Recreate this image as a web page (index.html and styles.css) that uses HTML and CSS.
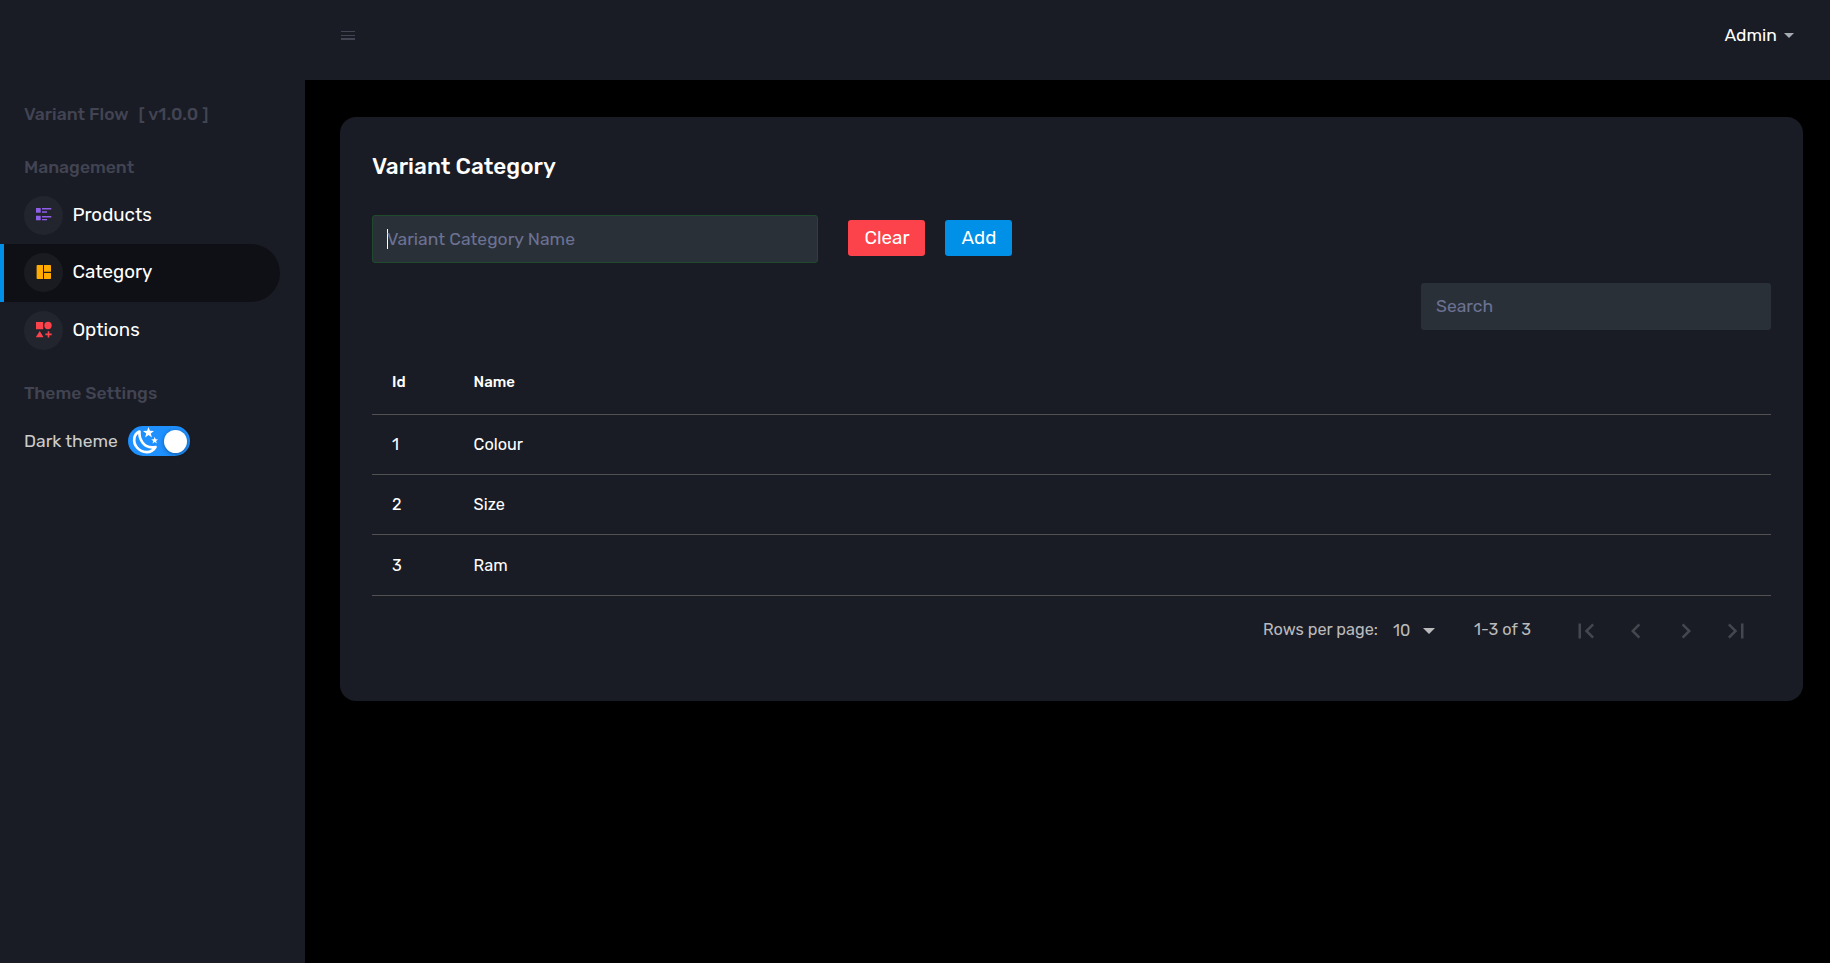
FILE: index.html
```html
<!DOCTYPE html>
<html lang="en">
<head>
<meta charset="utf-8">
<title>Variant Flow</title>
<link rel="stylesheet" href="styles.css">
</head>
<body>
<div class="app">
  <nav class="sidebar">
    <div class="heading brand"><span class="brand-name">Variant Flow</span><span class="brand-version">[ v1.0.0 ]</span></div>
    <div class="heading management">Management</div>
    <ul class="menu">
      <li class="item">
        <span class="badge"><svg width="39" height="39" viewBox="0 0 39 39" fill="#8f5fe8"><path d="M12 12h4.7v4.8H12zM18 12h9.3v1.6H18zM18 15.2h5v1.6h-5zM12 19.8h4.7v4.5H12zM18 20h9.3v1.4H18zM18 22.9h5v1.4h-5z"/></svg></span>
        <span class="label">Products</span>
      </li>
      <li class="item active">
        <span class="badge"><svg width="39" height="39" viewBox="0 0 39 39" fill="#ffab00"><path d="M13.4 12H19v14h-5.6a.8.8 0 0 1-.8-.8V12.800a.8.8 0 0 1 .8-.8zM20 12h6.200a.8.8 0 0 1 .8.8v5.900h-7zM20 20h7v5.200a.8.8 0 0 1-.8.8H20z"/></svg></span>
        <span class="label">Category</span>
      </li>
      <li class="item">
        <span class="badge"><svg width="39" height="39" viewBox="0 0 39 39" fill="#fc424a"><path d="M12 11h7.200v7.200H12zM15.700 20l3.900 6.200h-7.800zM23.700 20.200h1.600v2.400h2.400v1.600h-2.400v2.400h-1.600v-2.400h-2.400v-1.600h2.400z"/><circle cx="24" cy="14.500" r="3.700"/></svg></span>
        <span class="label">Options</span>
      </li>
    </ul>
    <div class="heading settings">Theme Settings</div>
    <div class="theme">
      <span class="theme-label">Dark theme</span>
      <span class="toggle">
        <svg width="30" height="30" viewBox="0 0 30 30"><path d="M11.500 5.500C5.500 8 4.500 16 9 21.500c5 6 14.500 6.500 18.500-.5-5 1-10-.5-13-4.500-2.500-3.500-3.500-7-3-11z" fill="none" stroke="#fff" stroke-width="2.700" stroke-linejoin="round"/><path fill="#fff" d="M20.500 1l1.400 3.800 4.100.1-3.200 2.500 1.100 4-3.400-2.300-3.400 2.300 1.100-4L15 4.900l4.100-.1zM26.700 10.800l.9 2.500 2.600.1-2.100 1.600.7 2.500-2.100-1.400-2.200 1.400.8-2.500-2.100-1.600 2.600-.1z"/></svg>
        <span class="knob"></span>
      </span>
    </div>
  </nav>
  <div class="main">
    <header class="navbar">
      <svg class="burger" width="14" height="10" viewBox="0 0 14 10" fill="#434553"><path d="M0 0h14v1H0zM0 4h14v1H0zM0 7h14v2H0z"/></svg>
      <div class="user"><span class="user-name">Admin</span><span class="user-caret"></span></div>
    </header>
    <main class="content">
      <section class="card">
        <h1 class="title">Variant Category</h1>
        <div class="form">
          <div class="field name-field"><span class="cursor"></span><span class="placeholder">Variant Category Name</span></div>
          <button class="btn clear">Clear</button>
          <button class="btn add">Add</button>
        </div>
        <div class="search-row"><div class="field search"><span class="placeholder">Search</span></div></div>
        <div class="table">
          <div class="row head"><span class="id">Id</span><span class="name">Name</span></div>
          <div class="row"><span class="id">1</span><span class="name">Colour</span></div>
          <div class="row"><span class="id">2</span><span class="name">Size</span></div>
          <div class="row last"><span class="id">3</span><span class="name">Ram</span></div>
        </div>
        <div class="pager">
          <span class="rows-label">Rows per page:</span>
          <span class="rows-count">10</span>
          <span class="rows-caret"></span>
          <span class="range">1-3 of 3</span>
          <div class="pages">
            <svg viewBox="0 0 24 24"><path d="M18.410 16.590L13.820 12l4.590-4.590L17 6l-6 6 6 6zM6 6h2v12H6z"/></svg>
            <svg viewBox="0 0 24 24"><path d="M15.410 7.410L14 6l-6 6 6 6 1.410-1.410L10.830 12z"/></svg>
            <svg viewBox="0 0 24 24"><path d="M10 6L8.590 7.410 13.170 12l-4.580 4.590L10 18l6-6z"/></svg>
            <svg viewBox="0 0 24 24"><path d="M5.590 7.410L10.180 12l-4.590 4.590L7 18l6-6-6-6zM16 6h2v12h-2z"/></svg>
          </div>
        </div>
      </section>
    </main>
  </div>
</div>
</body>
</html>
```
FILE: styles.css
```css
* { box-sizing: border-box; }
body {
  margin: 0;
  background: #000;
  color: #fff;
  font-family: Rubik, Roboto, "Liberation Sans", sans-serif;
  font-size: 17.5px;
  white-space: nowrap;
}
.app { display: flex; width: 100%; height: 963px; overflow: hidden; }
.sidebar { flex: none; width: 305px; height: 963px; background: #191c24; padding-top: 100px; }
.heading { height: 28px; line-height: 28px; padding-left: 24px; color: #424453; font-weight: 500; }
.brand { display: flex; }
.brand-name { width: 114.5px; }
.management { margin-top: 25px; }
.menu { list-style: none; margin: 5.5px 0 0; padding: 0; }
.item { display: flex; align-items: center; width: 280px; height: 57.5px; padding-left: 24px; gap: 9.4px; }
.active { background: #0f1015; border-left: 4px solid #0090e7; padding-left: 20px; border-radius: 0 29px 29px 0; }
.badge { flex: none; width: 39px; height: 39px; border-radius: 50%; background: #22242e; }
.active .badge { background: #1a1b20; }
.badge svg { display: block; }
.label { font-size: 18.75px; line-height: 22px; }
.active .label { padding-bottom: 1px; }
.settings { margin-top: 20px; }
.theme { display: flex; align-items: center; gap: 11px; height: 30px; margin-top: 19px; padding-left: 24px; }
.theme-label { width: 93px; color: #ccc; }
.toggle { position: relative; width: 62px; height: 30px; border-radius: 15px; background: #1e90ff; }
.toggle svg { display: block; }
.knob { position: absolute; right: 3px; top: 4px; width: 23px; height: 23px; border-radius: 50%; background: #fff; box-shadow: 0 1px 4px rgba(0, 0, 0, .4); }
.main { flex: 1; }
.navbar { display: flex; align-items: flex-start; justify-content: space-between; height: 80px; padding: 0 36px 0 36px; background: #191c24; }
.burger { margin-top: 31px; }
.user { display: flex; align-items: center; gap: 6px; height: 70px; }
.user-name { width: 53.5px; }
.user-caret { border: 5px solid transparent; border-top-color: #a4abb3; border-bottom: 0; }
.content { padding: 37px 27px 0 35px; }
.card { height: 584px; padding: 33px 32px 32px; border-radius: 16px; background: #191c24; }
.title { margin: 0; height: 34px; line-height: 34px; font-size: 22.5px; font-weight: 500; }
.form { display: flex; align-items: center; margin-top: 31px; height: 48px; }
.field { display: flex; align-items: center; background: #2a3038; border-radius: 3px; color: #6c7293; }
.name-field { width: 446px; height: 48px; padding-left: 14px; border: 1px solid #1f4a2c; }
.cursor { width: 1px; height: 20px; margin-right: -1px; background: #fff; }
.btn { height: 36px; padding: 0 0 2px 1px; margin-bottom: 2px; border: 0; border-radius: 3px; color: #fff; font-family: inherit; font-size: 18.75px; }
.clear { width: 77px; margin-left: 30px; background: #fc424a; }
.add { width: 67px; margin-left: 20px; background: #0090e7; }
.search-row { display: flex; justify-content: flex-end; margin-top: 20px; }
.search { width: 350px; height: 47px; padding: 0 0 2px 15px; }
.table { margin-top: 20px; font-size: 16.25px; }
.row { display: flex; align-items: center; height: 60px; padding: 0 20px; border-bottom: 1px solid #515151; }
.head { height: 65px; font-size: 15px; font-weight: 500; }
.last { height: 61px; }
.id { width: 81.6px; }
.pager { display: flex; align-items: center; justify-content: flex-end; height: 70px; padding-right: 20px; color: #bababc; font-size: 16.25px; }
.rows-label { width: 115px; padding-bottom: 3px; }
.rows-count { width: 16px; margin-left: 15px; padding-bottom: 1px; }
.rows-caret { margin-left: 14px; border: 6.25px solid transparent; border-top-color: #bababc; border-bottom: 0; }
.range { width: 57px; margin-left: 39px; padding-bottom: 3px; }
.pages { display: flex; gap: 20px; margin-left: 40px; }
.pages svg { width: 30px; height: 30px; fill: #45474e; }
```
